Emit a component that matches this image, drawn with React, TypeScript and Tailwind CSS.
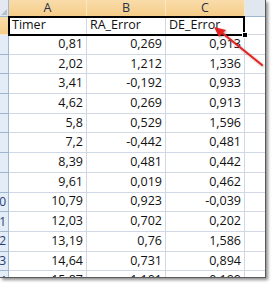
const FONT = "font-['Open_Sans',_'Liberation_Sans',_sans-serif]";

const rows: [string, string, string][] = [
  ["0,81", "0,269", "0,913"],
  ["2,02", "1,212", "1,336"],
  ["3,41", "-0,192", "0,933"],
  ["4,62", "0,269", "0,913"],
  ["5,8", "0,529", "1,596"],
  ["7,2", "-0,442", "0,481"],
  ["8,39", "0,481", "0,442"],
  ["9,61", "0,019", "0,462"],
  ["10,79", "0,923", "-0,039"],
  ["12,03", "0,702", "0,202"],
  ["13,19", "0,76", "1,586"],
  ["14,64", "0,731", "0,894"],
  ["15,87", "1,101", "0,199"],
];

function RowHead({ n }: { n: number }) {
  return (
    <div className="w-[9px] shrink-0 h-full bg-[#e4ecf7] border-r border-b border-[#9eb6ce] overflow-hidden flex justify-end items-center pr-[2px]">
      {n >= 10 && (
        <span className="text-[12px] text-[#1f3f73] leading-none">{n}</span>
      )}
    </div>
  );
}

export default function App() {
  return (
    <div className={`w-[271px] h-[283px] bg-white overflow-hidden ${FONT}`}>
      <div className="relative w-[266px] h-[278px] overflow-hidden bg-white border-r border-b border-[#5a5a5a] shadow-[2px_2px_3px_rgba(0,0,0,0.45)]">
        {/* column headers */}
        <div className="flex h-[17px] text-[12.5px] text-[#27324a]">
          <div className="w-[9px] shrink-0 relative bg-[#e4e9f1] border-r border-b border-[#9eb6ce]">
            <div className="absolute right-[1px] bottom-[1px] w-0 h-0 border-l-[6px] border-t-[6px] border-l-transparent border-t-transparent border-r-0 border-b-[6px] border-b-[#b4c1d1]" />
          </div>
          {["A", "B", "C"].map((c, i) => (
            <div
              key={c}
              className={`${i === 0 ? "w-[78px]" : "w-[79px]"} shrink-0 flex items-center justify-center bg-gradient-to-b from-[#f9dcaa] to-[#f6cd88] border-r border-[#fbe6c3] border-b border-b-[#f0a94a]`}
            >
              {c}
            </div>
          ))}
          <div className="flex-1 bg-[#e1e7ee] border-b border-[#9eb6ce]" />
        </div>

        {/* row 1 */}
        <div className="flex h-[18px] text-[12.5px] text-[#111]">
          <div className="w-[9px] shrink-0 bg-gradient-to-b from-[#f9dcaa] to-[#f6cd88] border-r border-[#f0a94a] border-b border-b-[#fbe6c3]" />
          <div className="w-[78px] shrink-0 flex items-center pl-[3px] border-r border-b border-[#d0d7e5]">Timer</div>
          <div className="w-[79px] shrink-0 flex items-center pl-[3px] border-r border-b border-[#d0d7e5]">RA_Error</div>
          <div className="w-[79px] shrink-0 flex items-center pl-[3px] border-r border-b border-[#d0d7e5]">DE_Error</div>
          <div className="flex-1 border-b border-[#d0d7e5]" />
        </div>

        {/* data rows */}
        {rows.map((r, i) => (
          <div key={i} className="flex h-[19.7px] text-[12.5px] text-[#111]">
            <RowHead n={i + 2} />
            {r.map((v, j) => (
              <div
                key={j}
                className={`${j === 0 ? "w-[78px]" : "w-[79px]"} shrink-0 flex items-center justify-end pr-[3px] border-r border-b border-[#d0d7e5]`}
              >
                {v}
              </div>
            ))}
            <div className="flex-1 border-b border-[#d0d7e5]" />
          </div>
        ))}

        {/* selection outline */}
        <div className="absolute left-[8px] top-[16px] w-[237px] h-[20px] border-2 border-black" />
        <div className="absolute left-[242px] top-[32px] w-[6px] h-[6px] bg-black border border-white" />

        {/* red arrow */}
        <svg className="absolute left-0 top-0" width="266" height="278">
          <defs>
            <filter id="sh" x="-20%" y="-20%" width="140%" height="140%">
              <feDropShadow dx="1" dy="1" stdDeviation="0.8" floodColor="#000" floodOpacity="0.35" />
            </filter>
          </defs>
          <g filter="url(#sh)">
            <line x1="262" y1="65" x2="221" y2="32" stroke="#e52323" strokeWidth="2" strokeLinecap="round" />
            <polygon points="214,27 226,30 219,37" fill="#e52323" />
          </g>
        </svg>
      </div>
    </div>
  );
}
